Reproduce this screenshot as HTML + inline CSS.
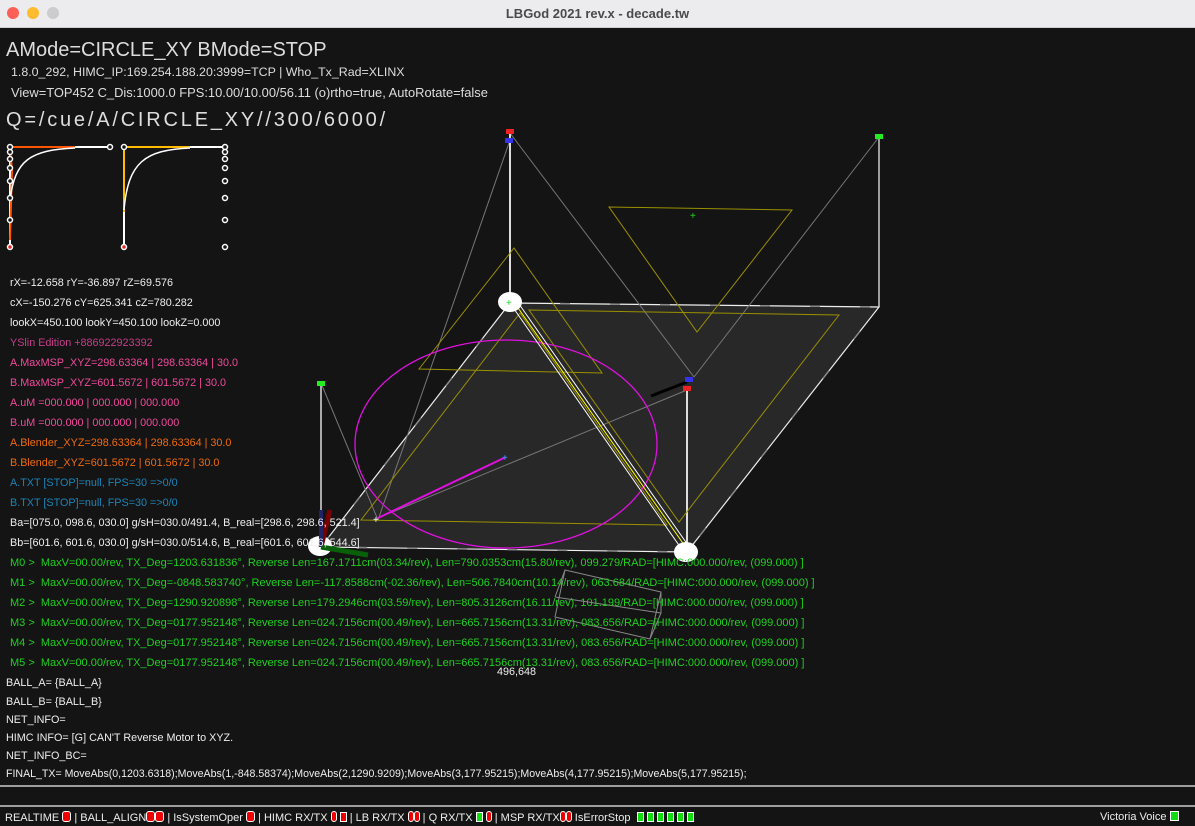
<!DOCTYPE html>
<html><head><meta charset="utf-8"><style>
body{margin:0;width:1195px;height:826px;background:#141414;overflow:hidden;position:relative;font-family:"Liberation Sans",sans-serif}
.tb{position:absolute;left:0;top:0;width:1195px;height:27px;background:#ecebee;border-bottom:1px solid #cfcfcf}
.tb .t{position:absolute;left:0;right:0;top:6px;text-align:center;font-size:13px;font-weight:bold;color:#4a4a4a}
.d{position:absolute;top:7px;width:12px;height:12px;border-radius:50%}
.x{position:absolute;white-space:nowrap;line-height:13px}
.s{font-size:10.8px;color:#eee}
.g{font-size:11px;color:#1fd01f}
.sb{position:absolute;left:5px;top:811px;font-size:11px;color:#eee;white-space:nowrap;line-height:13px}
.r{display:inline-block;width:7px;height:9px;background:#e00;border:1px solid #fff;border-radius:3px;vertical-align:-1px}
.gg{display:inline-block;width:5px;height:8px;background:#1d1;border:1px solid #fff;vertical-align:-1px}
</style></head><body>
<div class="tb"><div class="d" style="left:7px;background:#fe5f57"></div><div class="d" style="left:27px;background:#febc2e"></div><div class="d" style="left:47px;background:#ccc"></div><div class="t">LBGod 2021 rev.x - decade.tw</div></div>
<svg style="position:absolute;left:0;top:0" width="1195" height="826">
<polygon points="510,303 879,307 687,552 321,547" fill="#2a2a2a" fill-opacity="0.9"/>
<polyline points="510,303 879,307 687,552 321,547 510,303" fill="none" stroke="#eee" stroke-width="1.2"/>
<polyline points="510,303 879,307 687,552 321,547 510,303" fill="none" stroke="#888" stroke-width="1.4" stroke-dasharray="10,40"/>
<g stroke="#aaa" stroke-width="1" fill="none">
<line x1="510" y1="133" x2="694" y2="377" stroke="#777"/>
<line x1="879" y1="137" x2="694" y2="377" stroke="#777"/>
<line x1="510" y1="140" x2="378" y2="520" stroke="#777"/>
<line x1="321" y1="383" x2="378" y2="520" stroke="#777"/>
<line x1="378" y1="518" x2="687" y2="390" stroke="#777"/>
<line x1="510" y1="133" x2="510" y2="303" stroke="#ddd" stroke-width="2"/>
<line x1="879" y1="137" x2="879" y2="307" stroke="#ccc" stroke-width="1.5"/>
<line x1="687" y1="387" x2="687" y2="552" stroke="#ddd" stroke-width="2"/>
<line x1="321" y1="383" x2="321" y2="547" stroke="#aaa" stroke-width="2"/>
</g>
<g stroke="#9a9000" fill="none" stroke-width="1">
<polygon points="514,248 419,369 602,373"/>
<polygon points="529,310 839,315 679,522"/>
<polygon points="609,207 792,210 697,332"/>
<polygon points="520,313 361,520 667,525"/>
</g>
<ellipse cx="506" cy="444" rx="151" ry="104" fill="none" stroke="#e010e0" stroke-width="1.3"/>
<line x1="512" y1="306" x2="683" y2="551" stroke="#fff" stroke-width="1"/>
<line x1="516" y1="305" x2="687" y2="549" stroke="#ff0" stroke-width="1"/>
<line x1="519" y1="304" x2="690" y2="548" stroke="#fff" stroke-width="1"/>
<line x1="378" y1="518" x2="506" y2="457" stroke="#e010e0" stroke-width="2"/>
<line x1="651" y1="396" x2="687" y2="382" stroke="#000" stroke-width="3"/>
<g stroke="#888" fill="none"><polygon points="565,570 661,592 650,639 555,617"/><line x1="555" y1="597" x2="661" y2="613"/><line x1="565" y1="570" x2="555" y2="597"/><line x1="661" y1="592" x2="661" y2="613"/><line x1="661" y1="613" x2="650" y2="639"/></g>
<ellipse cx="510" cy="302" rx="12" ry="10" fill="#fff"/>
<ellipse cx="320" cy="546" rx="12" ry="10" fill="#fff"/>
<ellipse cx="686" cy="552" rx="12" ry="10" fill="#fff"/>
<line x1="321" y1="547" x2="330" y2="510" stroke="#700" stroke-width="5"/>
<line x1="321" y1="547" x2="321" y2="510" stroke="#226" stroke-width="4"/>
<line x1="321" y1="547" x2="368" y2="555" stroke="#086008" stroke-width="5"/>
<rect x="506" y="129" width="8" height="5" fill="#e22"/><rect x="505" y="138" width="8" height="5" fill="#33e"/>
<rect x="875" y="134" width="8" height="5" fill="#2e2"/><rect x="317" y="381" width="8" height="5" fill="#2e2"/>
<rect x="685" y="377" width="8" height="5" fill="#33e"/><rect x="683" y="386" width="8" height="5" fill="#e22"/>
<text x="506" y="306" fill="#2d2" font-size="10">+</text><text x="690" y="219" fill="#2d2" font-size="10">+</text><text x="502" y="461" fill="#29f" font-size="10">+</text>
<text x="373" y="523" fill="#fff" font-size="10">+</text>
<line x1="10" y1="147" x2="10" y2="247" stroke="#fff" stroke-width="2"/>
<line x1="10" y1="147" x2="110" y2="147" stroke="#fff" stroke-width="2"/>
<line x1="10" y1="147" x2="75" y2="147" stroke="#f50" stroke-width="2"/>
<path d="M10,240 L12,170 L10,150" stroke="#f50" stroke-width="2" fill="none"/>
<path d="M10,200 C15,160 30,150 75,148" stroke="#fff" stroke-width="1.5" fill="none"/>
<line x1="124" y1="147" x2="124" y2="247" stroke="#fff" stroke-width="2"/>
<line x1="124" y1="147" x2="225" y2="147" stroke="#fff" stroke-width="2"/>
<line x1="124" y1="147" x2="190" y2="147" stroke="#fb0" stroke-width="2"/>
<line x1="124" y1="147" x2="124" y2="212" stroke="#fb0" stroke-width="2"/>
<path d="M124,210 C128,162 145,150 190,148" stroke="#fff" stroke-width="1.5" fill="none"/>
<g fill="#141414" stroke="#fff" stroke-width="1.5">
<circle cx="10" cy="147" r="2.5"/><circle cx="10" cy="152" r="2.5"/><circle cx="10" cy="159" r="2.5"/><circle cx="10" cy="168" r="2.5"/><circle cx="10" cy="181" r="2.5"/><circle cx="10" cy="198" r="2.5"/><circle cx="10" cy="220" r="2.5"/><circle cx="10" cy="247" r="2.5" fill="#e22"/>
<circle cx="110" cy="147" r="2.5"/><circle cx="124" cy="147" r="2.5"/><circle cx="124" cy="247" r="2.5" fill="#e22"/>
<circle cx="225" cy="147" r="2.5"/><circle cx="225" cy="152" r="2.5"/><circle cx="225" cy="159" r="2.5"/><circle cx="225" cy="168" r="2.5"/><circle cx="225" cy="181" r="2.5"/><circle cx="225" cy="198" r="2.5"/><circle cx="225" cy="220" r="2.5"/><circle cx="225" cy="247" r="2.5"/>
</g>
<line x1="0" y1="786" x2="1195" y2="786" stroke="#ccc" stroke-width="1.5"/>
<line x1="0" y1="806" x2="1195" y2="806" stroke="#ccc" stroke-width="1.5"/>
</svg>
<div class="x" style="left:6px;top:39px;font-size:20px;line-height:22px;color:#ddd">AMode=CIRCLE_XY BMode=STOP</div>
<div class="x" style="left:11px;top:66px;font-size:12.4px;color:#ddd">1.8.0_292, HIMC_IP:169.254.188.20:3999=TCP | Who_Tx_Rad=XLINX</div>
<div class="x" style="left:11px;top:86px;font-size:12.9px;color:#ddd">View=TOP452 C_Dis:1000.0 FPS:10.00/10.00/56.11 (o)rtho=true, AutoRotate=false</div>
<div class="x" style="left:6px;top:109px;font-size:20px;line-height:22px;color:#ddd;letter-spacing:2.8px">Q=/cue/A/CIRCLE_XY//300/6000/</div>
<div class="x s" style="left:10px;top:277px">rX=-12.658 rY=-36.897 rZ=69.576</div>
<div class="x s" style="left:10px;top:297px">cX=-150.276 cY=625.341 cZ=780.282</div>
<div class="x s" style="left:10px;top:317px">lookX=450.100 lookY=450.100 lookZ=0.000</div>
<div class="x s" style="left:10px;top:337px;color:#c83c8c">YSlin Edition +886922923392</div>
<div class="x s" style="left:10px;top:357px;color:#f04a9c">A.MaxMSP_XYZ=298.63364 | 298.63364 | 30.0</div>
<div class="x s" style="left:10px;top:377px;color:#f04a9c">B.MaxMSP_XYZ=601.5672 | 601.5672 | 30.0</div>
<div class="x s" style="left:10px;top:397px;color:#f04a9c">A.uM =000.000 | 000.000 | 000.000</div>
<div class="x s" style="left:10px;top:417px;color:#f04a9c">B.uM =000.000 | 000.000 | 000.000</div>
<div class="x s" style="left:10px;top:437px;color:#f06a10">A.Blender_XYZ=298.63364 | 298.63364 | 30.0</div>
<div class="x s" style="left:10px;top:457px;color:#f06a10">B.Blender_XYZ=601.5672 | 601.5672 | 30.0</div>
<div class="x s" style="left:10px;top:477px;color:#1a84b8">A.TXT [STOP]=null, FPS=30 =&gt;0/0</div>
<div class="x s" style="left:10px;top:497px;color:#1a84b8">B.TXT [STOP]=null, FPS=30 =&gt;0/0</div>
<div class="x s" style="left:10px;top:517px">Ba=[075.0, 098.6, 030.0] g/sH=030.0/491.4, B_real=[298.6, 298.6, 521.4]</div>
<div class="x s" style="left:10px;top:537px">Bb=[601.6, 601.6, 030.0] g/sH=030.0/514.6, B_real=[601.6, 601.6, 544.6]</div>
<div class="x g" style="left:10px;top:557px">M0 &gt;&nbsp; MaxV=00.00/rev, TX_Deg=1203.631836°, Reverse Len=167.1711cm(03.34/rev), Len=790.0353cm(15.80/rev), 099.279/RAD=[HIMC:000.000/rev, (099.000) ]</div>
<div class="x g" style="left:10px;top:577px">M1 &gt;&nbsp; MaxV=00.00/rev, TX_Deg=-0848.583740°, Reverse Len=-117.8588cm(-02.36/rev), Len=506.7840cm(10.14/rev), 063.684/RAD=[HIMC:000.000/rev, (099.000) ]</div>
<div class="x g" style="left:10px;top:597px">M2 &gt;&nbsp; MaxV=00.00/rev, TX_Deg=1290.920898°, Reverse Len=179.2946cm(03.59/rev), Len=805.3126cm(16.11/rev), 101.199/RAD=[HIMC:000.000/rev, (099.000) ]</div>
<div class="x g" style="left:10px;top:617px">M3 &gt;&nbsp; MaxV=00.00/rev, TX_Deg=0177.952148°, Reverse Len=024.7156cm(00.49/rev), Len=665.7156cm(13.31/rev), 083.656/RAD=[HIMC:000.000/rev, (099.000) ]</div>
<div class="x g" style="left:10px;top:637px">M4 &gt;&nbsp; MaxV=00.00/rev, TX_Deg=0177.952148°, Reverse Len=024.7156cm(00.49/rev), Len=665.7156cm(13.31/rev), 083.656/RAD=[HIMC:000.000/rev, (099.000) ]</div>
<div class="x g" style="left:10px;top:657px">M5 &gt;&nbsp; MaxV=00.00/rev, TX_Deg=0177.952148°, Reverse Len=024.7156cm(00.49/rev), Len=665.7156cm(13.31/rev), 083.656/RAD=[HIMC:000.000/rev, (099.000) ]</div>
<div class="x s" style="left:497px;top:666px">496,648</div>
<div class="x s" style="left:6px;top:677px">BALL_A= {BALL_A}</div>
<div class="x s" style="left:6px;top:696px">BALL_B= {BALL_B}</div>
<div class="x s" style="left:6px;top:714px">NET_INFO=</div>
<div class="x s" style="left:6px;top:732px">HIMC INFO= [G] CAN'T Reverse Motor to XYZ.</div>
<div class="x s" style="left:6px;top:750px">NET_INFO_BC=</div>
<div class="x s" style="left:6px;top:768px;font-size:10.6px">FINAL_TX= MoveAbs(0,1203.6318);MoveAbs(1,-848.58374);MoveAbs(2,1290.9209);MoveAbs(3,177.95215);MoveAbs(4,177.95215);MoveAbs(5,177.95215);</div>
<div class="sb">REALTIME <span class="r"></span> | BALL_ALIGN<span class="r"></span><span class="r"></span> | IsSystemOper <span class="r"></span> | HIMC RX/TX <span class="r" style="width:4px"></span> <span class="gg" style="background:#e00"></span> | LB RX/TX <span class="r" style="width:4px"></span><span class="r" style="width:4px"></span> | Q RX/TX <span class="gg"></span> <span class="r" style="width:4px"></span> | MSP RX/TX<span class="r" style="width:4px"></span><span class="r" style="width:4px"></span> IsErrorStop &nbsp;<span class="gg"></span> <span class="gg"></span> <span class="gg"></span> <span class="gg"></span> <span class="gg"></span> <span class="gg"></span></div>
<div class="x" style="left:1100px;top:811px;font-size:11px;color:#eee">Victoria Voice <span class="gg" style="width:7px"></span></div>
</body></html>
